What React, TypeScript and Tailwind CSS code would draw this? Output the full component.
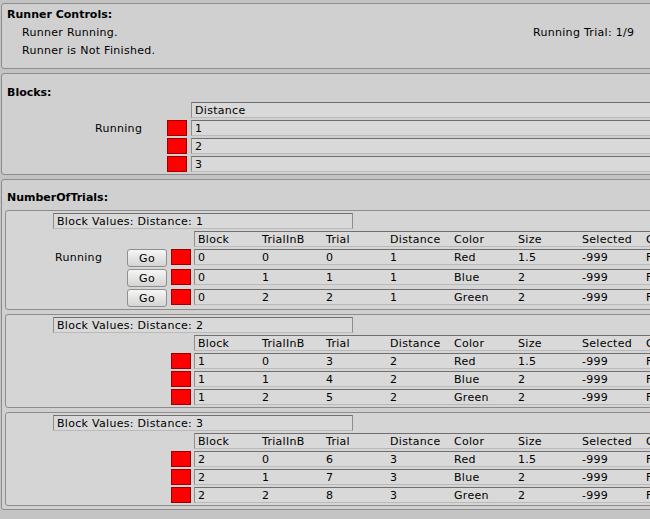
import type { ReactNode } from 'react';

type TrialRow = string[];

const trialHeader = ['Block', 'TrialInB', 'Trial', 'Distance', 'Color', 'Size', 'Selected', 'Correct'];

const trialBlocks: { distance: string; rows: TrialRow[] }[] = [
  {
    distance: '1',
    rows: [
      ['0', '0', '0', '1', 'Red', '1.5', '-999', 'False'],
      ['0', '1', '1', '1', 'Blue', '2', '-999', 'False'],
      ['0', '2', '2', '1', 'Green', '2', '-999', 'False'],
    ],
  },
  {
    distance: '2',
    rows: [
      ['1', '0', '3', '2', 'Red', '1.5', '-999', 'False'],
      ['1', '1', '4', '2', 'Blue', '2', '-999', 'False'],
      ['1', '2', '5', '2', 'Green', '2', '-999', 'False'],
    ],
  },
  {
    distance: '3',
    rows: [
      ['2', '0', '6', '3', 'Red', '1.5', '-999', 'False'],
      ['2', '1', '7', '3', 'Blue', '2', '-999', 'False'],
      ['2', '2', '8', '3', 'Green', '2', '-999', 'False'],
    ],
  },
];

function Panel({ children, className = '' }: { children: ReactNode; className?: string }) {
  return (
    <div className={`w-[720px] shrink-0 rounded-[3px] border border-[#8c8c8c] bg-[#d0d0d0] ${className}`}>
      {children}
    </div>
  );
}

function Field({ children, className = '' }: { children?: ReactNode; className?: string }) {
  return (
    <div
      className={`flex h-[16px] items-start overflow-hidden whitespace-nowrap border border-[#8e8e8e] border-t-[#6f6f6f] border-b-[#bababa] bg-[#d9d9d9] pl-[3px] pt-[1px] leading-[14px] ${className}`}
    >
      {children}
    </div>
  );
}

function RedSwatch() {
  return <div className="h-[16px] w-[20px] shrink-0 border border-[#9a0000] bg-[#ff0000]" />;
}

function GoButton() {
  return (
    <button className="h-[18px] w-[40px] shrink-0 rounded-[3px] border border-[#8f8f8f] bg-linear-to-b from-[#f6f6f6] to-[#d4d4d4] pt-[2px] text-center text-[11px] leading-[14px] text-black">
      Go
    </button>
  );
}

function Cells({ cells }: { cells: string[] }) {
  return (
    <>
      {cells.map((c, i) => (
        <span key={i} className="w-[64px] shrink-0">
          {c}
        </span>
      ))}
    </>
  );
}

function TrialBox({ distance, rows, running }: { distance: string; rows: TrialRow[]; running: boolean }) {
  return (
    <div className="flex flex-col gap-[2px] rounded-[3px] border border-[#8c8c8c] bg-[#d5d5d5] py-[2px]">
      <Field className="ml-[47px] w-[300px] border-[#8a8a8a] pl-[2px]">Block Values: Distance: {distance}</Field>
      <Field className="ml-[188px]">
        <Cells cells={trialHeader} />
      </Field>
      {rows.map((row, i) =>
        running ? (
          <div key={i} className="flex h-[18px] items-start">
            <div className="h-[16px] w-[121px] shrink-0 pl-[49px] pt-[2px] leading-[14px]">{i === 0 ? 'Running' : ''}</div>
            <GoButton />
            <div className="ml-[4px]">
              <RedSwatch />
            </div>
            <Field className="ml-[3px] flex-1">
              <Cells cells={row} />
            </Field>
          </div>
        ) : (
          <div key={i} className="flex h-[16px] items-start">
            <div className="w-[165px] shrink-0" />
            <RedSwatch />
            <Field className="ml-[3px] flex-1">
              <Cells cells={row} />
            </Field>
          </div>
        ),
      )}
    </div>
  );
}

export default function App() {
  return (
    <div className="flex h-[519px] w-[650px] flex-col gap-[4px] overflow-hidden bg-[#c4c4c4] pl-[1px] pt-[3px] font-['DejaVu_Sans',sans-serif] text-[11px] tracking-[0.3px] text-black">
      <Panel className="h-[66px] pt-[2px] leading-[18px]">
        <div className="pl-[5px] font-bold tracking-normal">Runner Controls:</div>
        <div className="flex pl-[20px]">
          <span className="w-[511px] shrink-0">Runner Running.</span>
          <span>Running Trial: 1/9</span>
        </div>
        <div className="pl-[20px]">Runner is Not Finished.</div>
      </Panel>

      <Panel className="pb-[2px] pt-[11px]">
        <div className="pl-[5px] font-bold leading-[16px] tracking-normal">Blocks:</div>
        <div className="mt-[1px] flex flex-col gap-[2px]">
          <Field className="ml-[189px]">Distance</Field>
          {['1', '2', '3'].map((v, i) => (
            <div key={v} className="flex h-[16px] items-start">
              <div className="h-[16px] w-[165px] shrink-0 pl-[93px] pt-[2px] leading-[14px]">{i === 0 ? 'Running' : ''}</div>
              <RedSwatch />
              <Field className="ml-[4px] flex-1">{v}</Field>
            </div>
          ))}
        </div>
      </Panel>

      <Panel className="pb-[3px] pt-[10px]">
        <div className="pl-[5px] font-bold leading-[16px] tracking-normal">NumberOfTrials:</div>
        <div className="mt-[4px] flex flex-col gap-[4px] pl-[3px]">
          {trialBlocks.map((b, i) => (
            <TrialBox key={b.distance} distance={b.distance} rows={b.rows} running={i === 0} />
          ))}
        </div>
      </Panel>
    </div>
  );
}
